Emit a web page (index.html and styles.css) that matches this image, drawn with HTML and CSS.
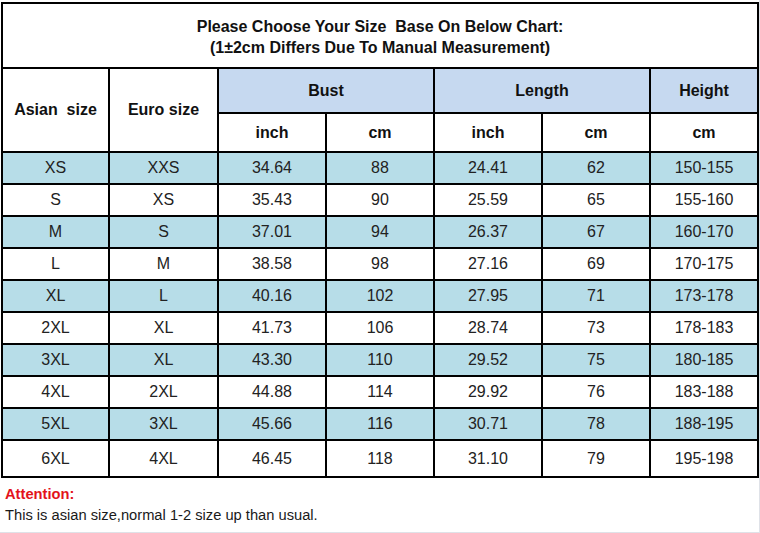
FILE: index.html
```html
<!DOCTYPE html>
<html>
<head>
<meta charset="utf-8">
<link rel="stylesheet" href="styles.css">
</head>
<body>
<div class="sheet">
  <table class="chart">
    <colgroup>
      <col class="c1"><col class="c2"><col class="c3"><col class="c3"><col class="c3"><col class="c3"><col class="c3">
    </colgroup>
    <tr class="r-title">
      <td colspan="7" class="title">Please Choose Your Size&nbsp; Base On Below Chart:<br>(1±2cm Differs Due To Manual Measurement)</td>
    </tr>
    <tr class="r-head1">
      <th rowspan="2">Asian&nbsp; size</th>
      <th rowspan="2">Euro size</th>
      <th colspan="2" class="blue">Bust</th>
      <th colspan="2" class="blue">Length</th>
      <th class="blue">Height</th>
    </tr>
    <tr class="r-head2">
      <th>inch</th><th>cm</th><th>inch</th><th>cm</th><th>cm</th>
    </tr>
    <tr class="row aqua"><td>XS</td><td>XXS</td><td>34.64</td><td>88</td><td>24.41</td><td>62</td><td>150-155</td></tr>
    <tr class="row"><td>S</td><td>XS</td><td>35.43</td><td>90</td><td>25.59</td><td>65</td><td>155-160</td></tr>
    <tr class="row aqua"><td>M</td><td>S</td><td>37.01</td><td>94</td><td>26.37</td><td>67</td><td>160-170</td></tr>
    <tr class="row"><td>L</td><td>M</td><td>38.58</td><td>98</td><td>27.16</td><td>69</td><td>170-175</td></tr>
    <tr class="row aqua"><td>XL</td><td>L</td><td>40.16</td><td>102</td><td>27.95</td><td>71</td><td>173-178</td></tr>
    <tr class="row"><td>2XL</td><td>XL</td><td>41.73</td><td>106</td><td>28.74</td><td>73</td><td>178-183</td></tr>
    <tr class="row aqua"><td>3XL</td><td>XL</td><td>43.30</td><td>110</td><td>29.52</td><td>75</td><td>180-185</td></tr>
    <tr class="row"><td>4XL</td><td>2XL</td><td>44.88</td><td>114</td><td>29.92</td><td>76</td><td>183-188</td></tr>
    <tr class="row aqua"><td>5XL</td><td>3XL</td><td>45.66</td><td>116</td><td>30.71</td><td>78</td><td>188-195</td></tr>
    <tr class="row last"><td>6XL</td><td>4XL</td><td>46.45</td><td>118</td><td>31.10</td><td>79</td><td>195-198</td></tr>
  </table>
  <div class="note">
    <div class="attn">Attention:</div>
    <div class="msg">This is asian size,normal 1-2 size up than usual.</div>
  </div>
</div>
</body>
</html>
```

FILE: styles.css
```css
html, body {
  margin: 0;
  padding: 0;
  background: #ffffff;
}
body {
  font-family: "Liberation Sans", Arial, sans-serif;
  color: #1a1a1a;
}
.sheet {
  width: 758px;
  height: 530px;
  padding-top: 2px;
  padding-left: 1px;
  border-right: 1px solid #dfe2e8;
  border-bottom: 1px solid #dfe2e8;
}
.chart {
  border-collapse: collapse;
  table-layout: fixed;
  width: 758px;
  border: 2px solid #000;
}
.c1 { width: 107px; }
.c2 { width: 109px; }
.c3 { width: 108px; }
.chart td, .chart th {
  border: 2px solid #000;
  padding: 0;
  text-align: center;
  vertical-align: middle;
  font-size: 16px;
  white-space: nowrap;
}
.chart th {
  font-weight: bold;
  color: #111;
}
.chart td { color: #222; }
.r-title { height: 65px; }
.title {
  font-weight: bold;
  line-height: 21px;
  color: #111 !important;
  padding-top: 2px !important;
}
.r-head1 { height: 45px; }
.r-head2 { height: 39px; }
.blue { background: #c6d9f0; }
.row { height: 32px; }
.row.last { height: 37px; }
.aqua td { background: #b7dde8; }
.note {
  padding: 6px 0 0 4px;
  font-size: 14.7px;
  line-height: 21px;
}
.attn {
  color: #e3131b;
  font-weight: bold;
}
.msg { color: #1a1a1a; }
```
